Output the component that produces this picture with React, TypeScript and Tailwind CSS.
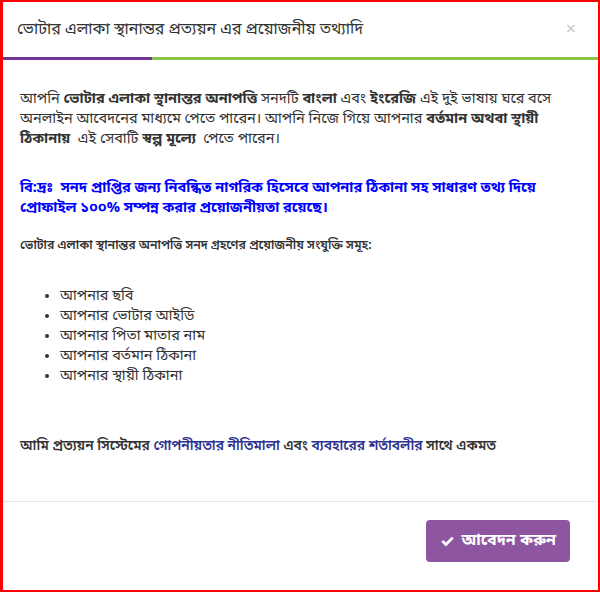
import React from 'react';

const bn = { fontFamily: '"Noto Sans Bengali", "Noto Sans", "Lohit Bengali", sans-serif' };

const items = [
  'আপনার ছবি',
  'আপনার ভোটার আইডি',
  'আপনার পিতা মাতার নাম',
  'আপনার বর্তমান ঠিকানা',
  'আপনার স্থায়ী ঠিকানা',
];

export default function App() {
  return (
    <div
      className="flex h-[592px] w-[600px] flex-col border-2 border-l-[3px] border-[#ff0000] bg-white text-[#333]"
      style={bn}
    >
      <div className="flex h-[55px] shrink-0 items-center justify-between pl-[14px] pr-[22px]">
        <h4 className="text-[16px] text-[#333]">ভোটার এলাকা স্থানান্তর প্রত্যয়ন এর প্রয়োজনীয় তথ্যাদি</h4>
        <button className="text-[18px] leading-none text-[#c8c8c8]">×</button>
      </div>
      <div className="flex h-[3px] shrink-0">
        <div className="w-[149px] bg-[#6f3597]" />
        <div className="flex-1 bg-[#8bc34a]" />
      </div>

      <div className="pl-[17px] pr-[14px] pt-[30px] text-[14.5px] leading-[20px]">
        <p>
          আপনি <b>ভোটার এলাকা স্থানান্তর অনাপত্তি</b> সনদটি <b>বাংলা</b> এবং <b>ইংরেজি</b> এই দুই ভাষায় ঘরে বসে
          অনলাইন আবেদনের মাধ্যমে পেতে পারেন। আপনি নিজে গিয়ে আপনার <b>বর্তমান অথবা স্থায়ী ঠিকানায়</b>&nbsp; এই
          সেবাটি <b>স্বল্প মূল্যে</b>&nbsp; পেতে পারেন।
        </p>
        <p className="mt-[29px] font-bold text-[#0000ff]">
          বি:দ্রঃ&nbsp; সনদ প্রাপ্তির জন্য নিবন্ধিত নাগরিক হিসেবে আপনার ঠিকানা সহ সাধারণ তথ্য দিয়ে প্রোফাইল ১০০%
          সম্পন্ন করার প্রয়োজনীয়তা রয়েছে।
        </p>
        <p className="mt-[17px] text-[12.3px] font-semibold">
          ভোটার এলাকা স্থানান্তর অনাপত্তি সনদ গ্রহণের প্রয়োজনীয় সংযুক্তি সমূহ:
        </p>
        <ul className="mt-[31px] list-disc pl-[40px]">
          {items.map((t) => (
            <li key={t}>{t}</li>
          ))}
        </ul>
        <p className="mt-[50px] text-[13.8px] font-semibold">
          আমি প্রত্যয়ন সিস্টেমের <span className="text-[#2e3192]">গোপনীয়তার নীতিমালা</span> এবং{' '}
          <span className="text-[#2e3192]">ব্যবহারের শর্তাবলীর</span> সাথে একমত
        </p>
      </div>

      <div className="mt-[44px] flex justify-end border-t border-[#e5e5e5] px-[28px] pt-[18px]">
        <button className="flex h-[42px] items-center gap-[6px] rounded-[4px] bg-[#8e55a0] px-[14px] text-[16px] font-bold text-white">
          <svg viewBox="0 0 16 16" className="h-[15px] w-[15px]" fill="white">
            <path d="M1.5 8.5 L3.6 6.4 L6.3 9.1 L12.6 2.8 L14.7 4.9 L6.3 13.3 Z" />
          </svg>
          আবেদন করুন
        </button>
      </div>
    </div>
  );
}
